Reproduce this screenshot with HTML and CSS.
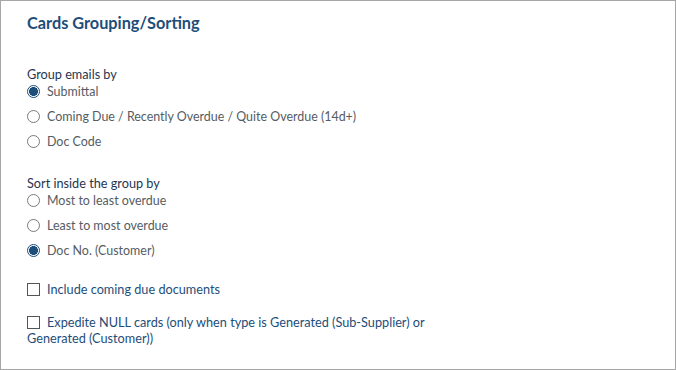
FILE: index.html
```html
<!DOCTYPE html>
<html>
<head>
<meta charset="utf-8">
<link rel="stylesheet" href="styles.css">
</head>
<body>
<div class="panel">
  <h2 class="title">Cards Grouping/Sorting</h2>

  <div class="group first">
    <div class="group-label">Group emails by</div>
    <label class="opt"><span class="radio checked"></span>Submittal</label>
    <label class="opt"><span class="radio"></span>Coming Due / Recently Overdue / Quite Overdue (14d+)</label>
    <label class="opt"><span class="radio"></span>Doc Code</label>
  </div>

  <div class="group">
    <div class="group-label">Sort inside the group by</div>
    <label class="opt"><span class="radio"></span>Most to least overdue</label>
    <label class="opt"><span class="radio"></span>Least to most overdue</label>
    <label class="opt"><span class="radio checked"></span>Doc No. (Customer)</label>
  </div>

  <div class="checks">
    <label class="chk"><span class="box"></span>Include coming due documents</label>
    <label class="chk"><span class="box"></span>Expedite NULL cards (only when type is Generated (Sub-Supplier) or Generated (Customer))</label>
  </div>
</div>
</body>
</html>
```

FILE: styles.css
```css
html, body {
  margin: 0;
  padding: 0;
  background: #ffffff;
}

.panel {
  box-sizing: border-box;
  width: 676px;
  height: 370px;
  border: 1px solid #a6a6a6;
  padding: 12px 26px 0 26px;
  font-family: Lato, "Open Sans", sans-serif;
  font-size: 12.7px;
}

.title {
  margin: 0;
  font-size: 16.3px;
  line-height: 20px;
  font-weight: 700;
  color: #1d4d79;
}

.group {
  display: flex;
  flex-direction: column;
  margin-top: 21px;
}

.group.first {
  margin-top: 33px;
}

.group-label {
  color: #1f3550;
  line-height: 16px;
  margin-bottom: 1px;
}

.opt {
  display: flex;
  align-items: center;
  height: 25px;
  color: #555c63;
  font-size: 12.45px;
  line-height: 16px;
}

.opt:nth-child(2) {
  height: 17px;
  margin-bottom: 4px;
}

.radio {
  box-sizing: border-box;
  width: 13px;
  height: 13px;
  border: 1px solid #7a7a7a;
  border-radius: 50%;
  margin-right: 7px;
  flex: none;
}

.radio.checked {
  border: 1px solid #1d4d79;
  background: radial-gradient(circle, #1d4d79 0 4.3px, #ffffff 4.6px);
}

.checks {
  margin-top: 18px;
  width: 420px;
}

.chk {
  display: block;
  color: #1d4d79;
  line-height: 16px;
  margin-bottom: 17px;
}

.box {
  display: inline-block;
  box-sizing: border-box;
  width: 13px;
  height: 13px;
  border: 1px solid #555555;
  vertical-align: -2px;
  margin-right: 7px;
}
```
